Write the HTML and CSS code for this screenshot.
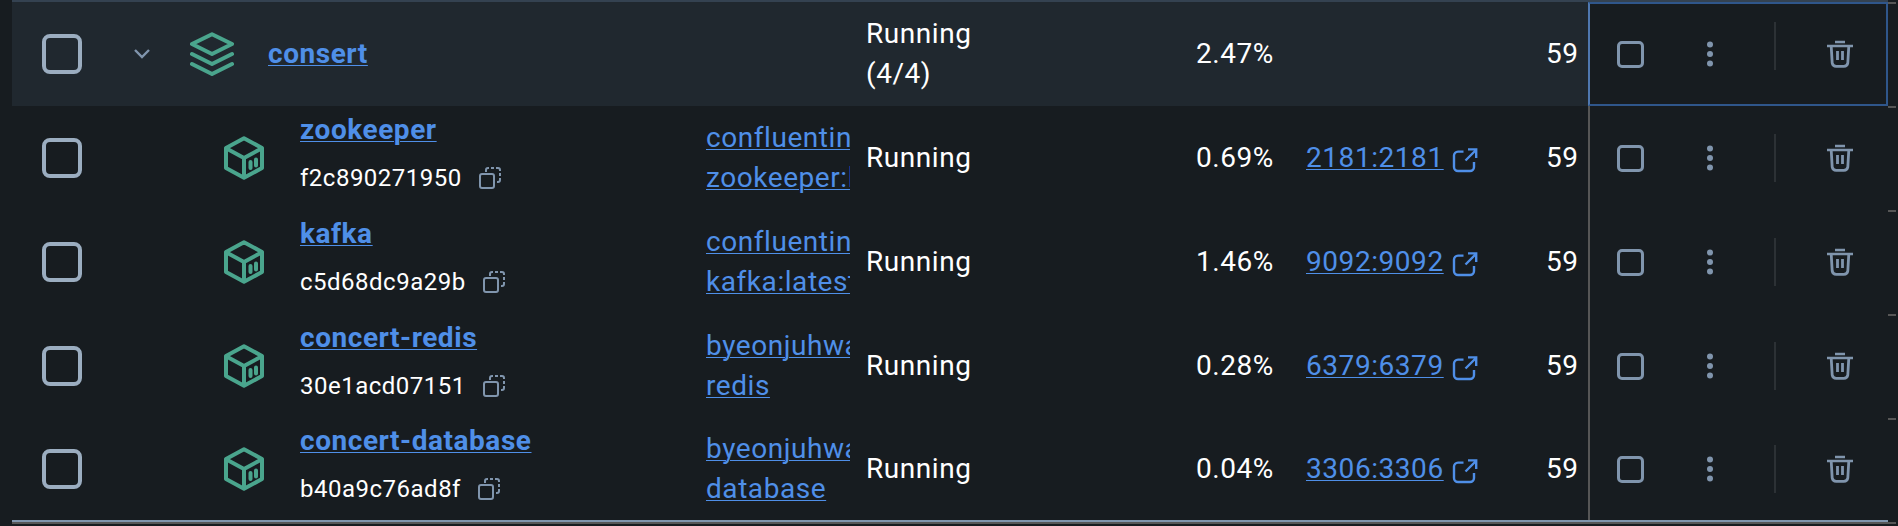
FILE: index.html
```
<!DOCTYPE html>
<html lang="en">
<head>
<meta charset="utf-8">
<title>Containers</title>
<link rel="stylesheet" href="styles.css">
</head>
<body>
<svg class="defs" aria-hidden="true">
  <symbol id="cube" viewBox="0 0 40 44"><g fill="none" stroke="currentColor" stroke-width="4" stroke-linejoin="round" stroke-linecap="round"><path d="M20 2.200 38 12v20L20 41.800 2 32V12z"/><path d="M2.500 12.500 20 22 37.500 12.500M20 22v19"/><path d="M26.500 26v6M32 23.500v6" stroke-width="4"/></g></symbol>
  <symbol id="copy" viewBox="0 0 24 24"><g fill="none" stroke="currentColor" stroke-width="2"><rect x="2" y="8" width="14" height="14" rx="2"/><path d="M8 6V4a2 2 0 0 1 2-2h1M13 2h3M18 2h2q2 0 2 2v1M22 7v3M22 12v2q0 2-2 2h-1"/></g></symbol>
  <symbol id="open" viewBox="0 0 26 26"><g fill="none" stroke="currentColor" stroke-width="2.400"><path d="M11.500 4.600H6a4 4 0 0 0-4 4V20a4 4 0 0 0 4 4h12a4 4 0 0 0 4-4v-5"/><path d="M16 2.400h8.200V11M24 3 13.500 13.500"/></g></symbol>
  <symbol id="dots" viewBox="0 0 8 26"><g fill="currentColor"><circle cx="4" cy="3.500" r="3"/><circle cx="4" cy="13" r="3"/><circle cx="4" cy="22.500" r="3"/></g></symbol>
  <symbol id="trash" viewBox="0 0 26 28"><g fill="none" stroke="currentColor" stroke-width="2.400"><path d="M8 2h10M0 6h26"/><path d="M4.200 6l1 17a4 4 0 0 0 4 3.300h7.600a4 4 0 0 0 4-3.300l1-17" stroke-width="2.800"/><path d="M10.500 11v9M15.500 11v9" stroke-width="2.800"/></g></symbol>
</svg>
<main class="table">
  <div class="row group">
    <span class="check"></span>
    <div class="lead"><svg class="chevron" viewBox="0 0 16 10"><path d="M1 1l7 7 7-7" fill="none" stroke="currentColor" stroke-width="2.400"/></svg><svg class="stack" viewBox="0 0 44 44"><g fill="none" stroke="currentColor" stroke-width="4" stroke-linejoin="round" stroke-linecap="round"><path d="M22 2.200 42 12 22 22 2 12zM2 22l20 10 20-10M2 32l20 10 20-10"/></g></svg><a class="name">consert</a></div>
    <div class="image"></div><div class="status">Running<br>(4/4)</div><div class="cpu">2.47%</div><div class="port"></div><div class="mem">59</div>
    <div class="actions"><span class="stop"></span><svg class="dots"><use href="#dots"/></svg><i class="rule"></i><svg class="trash"><use href="#trash"/></svg></div>
  </div>
  <div class="row">
    <span class="check"></span>
    <div class="lead child"><svg class="cube"><use href="#cube"/></svg><div class="ident"><a class="name">zookeeper</a><div class="id">f2c890271950<svg class="copy"><use href="#copy"/></svg></div></div></div>
    <div class="image"><a>confluentinc<br>zookeeper:l</a></div><div class="status">Running</div><div class="cpu">0.69%</div><div class="port"><a>2181:2181</a><svg class="open"><use href="#open"/></svg></div><div class="mem">59</div>
    <div class="actions"><span class="stop"></span><svg class="dots"><use href="#dots"/></svg><i class="rule"></i><svg class="trash"><use href="#trash"/></svg></div>
  </div>
  <div class="row">
    <span class="check"></span>
    <div class="lead child"><svg class="cube"><use href="#cube"/></svg><div class="ident"><a class="name">kafka</a><div class="id">c5d68dc9a29b<svg class="copy"><use href="#copy"/></svg></div></div></div>
    <div class="image"><a>confluentinc<br>kafka:latest</a></div><div class="status">Running</div><div class="cpu">1.46%</div><div class="port"><a>9092:9092</a><svg class="open"><use href="#open"/></svg></div><div class="mem">59</div>
    <div class="actions"><span class="stop"></span><svg class="dots"><use href="#dots"/></svg><i class="rule"></i><svg class="trash"><use href="#trash"/></svg></div>
  </div>
  <div class="row">
    <span class="check"></span>
    <div class="lead child"><svg class="cube"><use href="#cube"/></svg><div class="ident"><a class="name">concert-redis</a><div class="id">30e1acd07151<svg class="copy"><use href="#copy"/></svg></div></div></div>
    <div class="image"><a>byeonjuhwa<br>redis</a></div><div class="status">Running</div><div class="cpu">0.28%</div><div class="port"><a>6379:6379</a><svg class="open"><use href="#open"/></svg></div><div class="mem">59</div>
    <div class="actions"><span class="stop"></span><svg class="dots"><use href="#dots"/></svg><i class="rule"></i><svg class="trash"><use href="#trash"/></svg></div>
  </div>
  <div class="row last">
    <span class="check"></span>
    <div class="lead child"><svg class="cube"><use href="#cube"/></svg><div class="ident"><a class="name">concert-database</a><div class="id">b40a9c76ad8f<svg class="copy"><use href="#copy"/></svg></div></div></div>
    <div class="image"><a>byeonjuhwa<br>database</a></div><div class="status">Running</div><div class="cpu">0.04%</div><div class="port"><a>3306:3306</a><svg class="open"><use href="#open"/></svg></div><div class="mem">59</div>
    <div class="actions"><span class="stop"></span><svg class="dots"><use href="#dots"/></svg><i class="rule"></i><svg class="trash"><use href="#trash"/></svg></div>
  </div>
  <div class="foot"></div>
</main>
</body>
</html>
```
FILE: styles.css
```
* { box-sizing: border-box; }
body { margin: 0; height: 526px; overflow: hidden; background: #171c20; color: #fff; font: 28px/40px Roboto, sans-serif; letter-spacing: .56px; }
svg { display: block; flex: none; }
.defs { position: absolute; width: 0; height: 0; }
.table { width: 1896px; padding-left: 12px; background: linear-gradient(#344251, #344251) 12px 0 / 1876px 2px no-repeat; padding-top: 2px; }
.row { display: grid; grid-template-columns: 30px 40px 624px 144px 16px 330px 110px 240px 42px 300px 8px; align-items: center; height: 104px; }
.row > * { grid-row: 1; }
.check { grid-column: 2; width: 40px; height: 40px; border: 4px solid #9badc0; border-radius: 8px; }
.lead { grid-column: 3; display: flex; align-items: center; }
.chevron { width: 16px; height: 10px; margin-left: 52px; color: #8095ad; }
.stack { width: 44px; height: 44px; margin: 0 34px 0 40px; color: #4aa58d; }
.child { padding-left: 142px; }
.cube { width: 40px; height: 44px; margin-right: 36px; color: #4aa58d; }
.ident { display: flex; flex-direction: column; align-items: flex-start; letter-spacing: .5px; }
.name, .image a, .port a { color: #4f8fe8; text-decoration: underline; text-decoration-thickness: 1px; text-underline-offset: 2px; }
.name { font-weight: 700; letter-spacing: .55px; }
.id { display: flex; align-items: center; gap: 16px; height: 56px; font-size: 24px; }
.copy { width: 24px; height: 24px; color: #8095ad; }
.image { grid-column: 4; overflow: hidden; white-space: nowrap; }
.status { grid-column: 6; }
.cpu { grid-column: 7; }
.port { grid-column: 8; display: flex; align-items: center; }
.open { width: 26px; height: 26px; margin: 3px 0 0 8px; color: #4f8fe8; }
.mem { grid-column: 9; overflow: hidden; }
.actions { grid-column: 10; display: flex; align-items: center; height: 104px; padding-left: 27px; border-left: 2px solid #565656; }
.group { background: linear-gradient(#20282f, #20282f) 0 0 / 1576px 104px no-repeat; }
.group .actions { border: 2px solid #2f568b; border-left-color: #4f78b0; }
.stop { width: 27px; height: 27px; border: 3px solid #8095ad; border-radius: 5px; }
.dots { width: 8px; height: 26px; margin-left: 62px; color: #8095ad; }
.rule { width: 2px; height: 48px; margin-left: 60px; background: #2c3135; }
.group .rule { transform: translateY(-8px); }
.trash { width: 26px; height: 28px; margin-left: 51px; color: #8095ad; }
.row::after { content: ""; grid-row: 1; grid-column: 11; align-self: start; width: 8px; height: 2px; background: #565656; }
.last { height: 102px; }
.last .actions { height: 102px; }
.foot { height: 4px; background: linear-gradient(#8095ad, #8095ad) 0 0 / 1876px 2px no-repeat, linear-gradient(#565656, #565656) 0 2px / 100% 2px no-repeat; }
```
